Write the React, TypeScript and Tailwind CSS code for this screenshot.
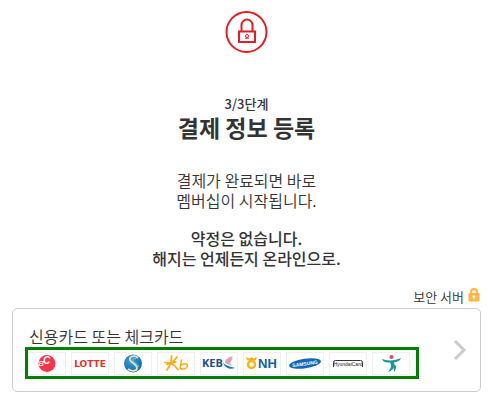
import React from "react";

const LockIcon = () => (
  <svg width="44" height="44" viewBox="0 0 44 44" fill="none" stroke="#e51c24" aria-hidden="true">
    <circle cx="21.500" cy="22" r="20" strokeWidth="2" />
    <path d="M16.500 21v-6a5.500 5.500 0 0 1 11 0v6" strokeWidth="2" />
    <rect x="14" y="21.500" width="16" height="10.500" strokeWidth="2" />
    <circle cx="22" cy="26" r="1.500" strokeWidth="1" />
    <path d="M20 28.200h4" strokeWidth="1" />
  </svg>
);

const SecureIcon = () => (
  <svg width="12" height="14" viewBox="0 0 12 14" fill="none" aria-hidden="true">
    <path d="M3 6V4a3 3 0 0 1 6 0v2" stroke="#ffb53f" strokeWidth="2" />
    <rect x="0.500" y="5" width="11" height="8.500" rx="1" fill="#ffb53f" />
    <path d="M4.500 7.500h3v2h-1v2h-1v-2h-1z" fill="#fff" />
  </svg>
);

const logoFont = "'Liberation Sans', sans-serif";

const BcLogo = () => (
  <svg width="36" height="21" viewBox="0 0 36 21" role="img" aria-label="BC">
    <circle cx="18" cy="10.500" r="8.500" fill="#fa344b" />
    <text x="9.500" y="13" fontFamily={logoFont} fontSize="8" fontStyle="italic" fill="#fff">B</text>
    <text x="14" y="11" fontFamily={logoFont} fontSize="10" fontStyle="italic" fontWeight="bold" fill="#fff">C</text>
  </svg>
);

const LotteLogo = () => (
  <svg width="36" height="21" viewBox="0 0 36 21" role="img">
    <text x="18" y="14" textAnchor="middle" fontFamily="'DejaVu Sans', sans-serif" fontSize="9" fontWeight="bold" fill="#e33229">
      LOTTE
    </text>
  </svg>
);

const ShinhanLogo = () => (
  <svg width="36" height="21" viewBox="0 0 36 21" role="img" aria-label="Shinhan">
    <defs>
      <radialGradient id="globe" cx="0.4" cy="0.35" r="0.7">
        <stop offset="0" stopColor="#3d9fd3" />
        <stop offset="1" stopColor="#0869ae" />
      </radialGradient>
    </defs>
    <circle cx="18" cy="10.500" r="9" fill="url(#globe)" />
    <path d="M23 5c-3-3-9-2-8 2 1 3 7 4 7 8 0 3-5 4-9 1" fill="none" stroke="#e6e3bd" strokeWidth="1.800" />
    <path d="M21 6c-2-1-4 0-3 2 1 2 5 3 6 6" fill="none" stroke="#a9cfd0" strokeWidth="0.800" />
  </svg>
);

const KbLogo = () => (
  <svg width="36" height="21" viewBox="0 0 36 21" fill="none" stroke="#fbae17" strokeLinecap="round" role="img" aria-label="KB">
    <path d="M7 9.500c3 .8 8 0 10.500-.5M13.500 3L13 10 9 17M19 4c-2 3-6 6-10 7.500M13 10c3 2 5 4 7 6.500" strokeWidth="1.800" />
    <path d="M23.500 7l-1.500 8.500c3 1 7 .5 7.500-2.500 0-3-4-3-7 0" strokeWidth="1.500" />
  </svg>
);

const KebLogo = () => (
  <svg width="36" height="21" viewBox="0 0 36 21" role="img">
    <text x="1" y="14" fontFamily="'Open Sans', sans-serif" fontSize="11" fontWeight="bold" fill="#194f8d">KEB</text>
    <path d="M32 3c-5 1-8 4-8 6l5-1z" fill="#efa1ab" />
    <path d="M32 5l-3 5 2 3-7-3c0-3 3-5 8-5z" fill="#d9a5bd" />
    <path d="M22 9c1 3 6 4 12 6-5 2-11 0-12-6z" fill="#247bb5" />
  </svg>
);

const NhLogo = () => (
  <svg width="36" height="21" viewBox="0 0 36 21" role="img">
    <path d="M2 4l3.500 1.500 2-1.500 2 1.500L13 4l-1 3-3 1H6L3 7z" fill="#ffb30f" />
    <circle cx="7.500" cy="11.500" r="3.500" fill="none" stroke="#ffb30f" strokeWidth="2.500" />
    <text x="14" y="15" fontFamily={logoFont} fontSize="13" fontWeight="bold" fill="#1261ae">NH</text>
  </svg>
);

const SamsungLogo = () => (
  <svg width="36" height="21" viewBox="0 0 36 21" role="img">
    <g transform="rotate(-8 18 10.500)">
      <ellipse cx="18" cy="10.500" rx="16" ry="4.800" fill="#1268b3" />
      <text x="18" y="12.500" textAnchor="middle" fontFamily={logoFont} fontSize="5" fontWeight="bold" fill="#fff">
        SAMSUNG
      </text>
    </g>
  </svg>
);

const HyundaiLogo = () => (
  <svg width="36" height="21" viewBox="0 0 36 21" role="img">
    <path d="M3.500 14V9.500q0-2 2-2h25q2 0 2 2V14" fill="none" stroke="#333" strokeWidth="1" />
    <text x="18" y="13" textAnchor="middle" fontFamily={logoFont} fontSize="5" fill="#222">HyundaiCard</text>
  </svg>
);

const HanaLogo = () => (
  <svg width="36" height="21" viewBox="0 0 36 21" role="img" aria-label="Hana">
    <circle cx="18.500" cy="4" r="2" fill="#e6426c" />
    <path d="M9 6c5 2 13 2 19-1-1 3-4 4-7 4.500 1 4 0 7.500-6 9.500 3-4 4-6 2-9.500-4 0-7-.5-8-3.500z" fill="#149a9b" />
    <path d="M20 11c4 1 4 4 1 8 0-3 0-4-2-5z" fill="#149a9b" />
  </svg>
);

const cardLogos = [
  BcLogo,
  LotteLogo,
  ShinhanLogo,
  KbLogo,
  KebLogo,
  NhLogo,
  SamsungLogo,
  HyundaiLogo,
  HanaLogo,
];

const PaymentOption: React.FC = () => (
  <button
    type="button"
    className="flex w-full items-center justify-between rounded-[5px] border border-[#ccc] bg-white p-3 text-left"
  >
    <span className="flex flex-col">
      <span className="pt-1 pl-1 text-base leading-[22px] font-[350]">신용카드 또는 체크카드</span>
      <span className="flex gap-[5px] border-[3px] border-[#008000] pt-[2px] pr-[6px] pb-[1px]">
        {cardLogos.map((Logo, i) => (
          <span key={i} className="border border-[#f0f0f0]">
            <Logo />
          </span>
        ))}
      </span>
    </span>
    <svg width="16" height="20" viewBox="0 0 16 20" fill="none" stroke="#ccc" strokeWidth="3" aria-hidden="true">
      <path d="M3 1l9 9-9 9" />
    </svg>
  </button>
);

export default function App() {
  return (
    <main className="bg-white pt-[10px] pr-[10px] pb-2 pl-3 font-['Noto_Sans_CJK_KR',sans-serif] text-[#333]">
      <div className="flex flex-col items-center text-center">
        <LockIcon />
        <p className="mt-10 text-[13px] leading-5 font-medium">3/3단계</p>
        <h1 className="text-[23px] leading-[26px] font-bold">결제 정보 등록</h1>
        <p className="mt-[30px] text-base leading-5 font-[350]">
          결제가 완료되면 바로
          <br />
          멤버십이 시작됩니다.
        </p>
        <p className="mt-[18px] text-base leading-5 font-medium">
          약정은 없습니다.
          <br />
          해지는 언제든지 온라인으로.
        </p>
      </div>
      <div className="mt-5 mb-[2px] flex items-start justify-end gap-1 pr-[1px] text-[13px] leading-[18px] font-[350]">
        <span>보안 서버</span>
        <SecureIcon />
      </div>
      <PaymentOption />
    </main>
  );
}
